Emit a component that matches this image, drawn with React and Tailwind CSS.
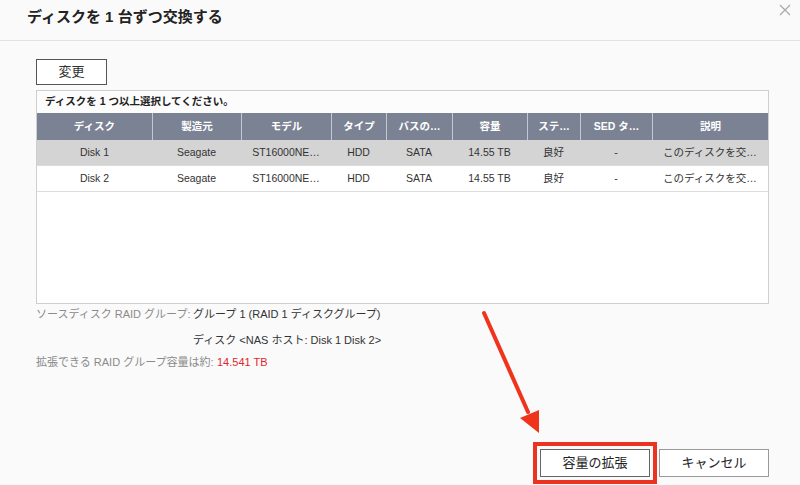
const cols = [
  { label: "ディスク", w: "w-[115px]" },
  { label: "製造元", w: "w-[89px]" },
  { label: "モデル", w: "w-[90px]" },
  { label: "タイプ", w: "w-[55px]" },
  { label: "バスの…", w: "w-[66px]" },
  { label: "容量", w: "w-[75px]" },
  { label: "ステ…", w: "w-[53px]" },
  { label: "SED タ…", w: "w-[72px]" },
  { label: "説明", w: "w-[116px]" },
]

const disks = [
  ["Disk 1", "Seagate", "ST16000NE…", "HDD", "SATA", "14.55 TB", "良好", "-", "このディスクを交…"],
  ["Disk 2", "Seagate", "ST16000NE…", "HDD", "SATA", "14.55 TB", "良好", "-", "このディスクを交…"],
]

function App(){

  return(

    <div
      className="relative w-[800px] h-[485px] overflow-hidden bg-[#fafafa] flex flex-col text-[#333]"
      style={{ fontFamily: '"Liberation Sans", "Noto Sans CJK JP", sans-serif' }}
    >

      {/* HEADER */}

      <div className="h-[41px] border-b border-[#e2e2e2] flex justify-between items-start shrink-0">
        <h1 className="pl-[27px] pt-[5px] text-[15px] leading-[24px] font-bold text-[#222] whitespace-nowrap">
          ディスクを 1 台ずつ交換する
        </h1>
        <svg width="12" height="12" viewBox="0 0 12 12" className="mt-[4px] mr-[9px]">
          <path d="M1 1 L11 11 M11 1 L1 11" stroke="#a8a8a8" strokeWidth="1.2" />
        </svg>
      </div>

      {/* BODY */}

      <div className="flex-1 flex flex-col pl-[36px] pr-[31px] pt-[18px]">

        <button className="w-[71px] h-[26px] border border-[#555] bg-white text-[13px] text-[#333]">
          変更
        </button>

        <div className="mt-[5px] w-[733px] h-[214px] border border-[#cfcfcf] bg-white flex flex-col">

          <div className="h-[22px] flex items-center pl-[8px] text-[10.5px] font-bold text-[#222] bg-[#fcfcfc]">
            ディスクを 1 つ以上選択してください。
          </div>

          <div className="h-[27px] flex bg-[#7b8294]">
            {cols.map((c, i)=>(
              <div
                key={c.label}
                className={`${c.w} flex items-center justify-center text-[10.5px] font-bold text-white ${i > 0 ? "border-l border-[#c4c8d2]" : ""}`}
              >
                {c.label}
              </div>
            ))}
          </div>

          {disks.map((d, r)=>(
            <div
              key={r}
              className={`h-[26px] flex border-b border-[#dcdcdc] ${r === 0 ? "bg-[#d4d4d4]" : "bg-white"}`}
            >
              {d.map((v, i)=>(
                <div key={i} className={`${cols[i].w} flex items-center justify-center text-[10.5px] text-[#333]`}>
                  {v}
                </div>
              ))}
            </div>
          ))}

        </div>

        {/* INFO */}

        <div className="text-[11px] whitespace-nowrap">
          <div className="flex h-[20px] items-center">
            <span className="w-[157px] shrink-0 text-[#8a8a8a]">ソースディスク RAID グループ:</span>
            <span className="text-[#333]">グループ 1 (RAID 1 ディスクグループ)</span>
          </div>
          <div className="flex h-[24px] items-end">
            <span className="w-[157px] shrink-0"></span>
            <span className="text-[#333]">ディスク &lt;NAS ホスト: Disk 1 Disk 2&gt;</span>
          </div>
          <div className="flex h-[22px] items-end">
            <span className="w-[181px] shrink-0 text-[#8a8a8a]">拡張できる RAID グループ容量は約:</span>
            <span className="text-[#e0262b]">14.541 TB</span>
          </div>
        </div>

        {/* FOOTER */}

        <div className="mt-auto mb-[1px] flex justify-end items-center gap-[2px]">
          <div className="border-4 border-[#ea3320] p-[3px]">
            <button className="w-[110px] h-[28px] border border-[#666] bg-white text-[13px] text-[#222]">
              容量の拡張
            </button>
          </div>
          <button className="w-[110px] h-[28px] border border-[#999] bg-white text-[13px] text-[#222]">
            キャンセル
          </button>
        </div>

      </div>

      {/* ARROW ANNOTATION */}

      <svg className="absolute left-0 top-0 pointer-events-none" width="800" height="485">
        <line x1="484" y1="313" x2="528" y2="412" stroke="#f0341c" strokeWidth="4" strokeLinecap="round" />
        <polygon points="539,433 520,418 539,410" fill="#f0341c" />
      </svg>

    </div>

  )

}

export default App
